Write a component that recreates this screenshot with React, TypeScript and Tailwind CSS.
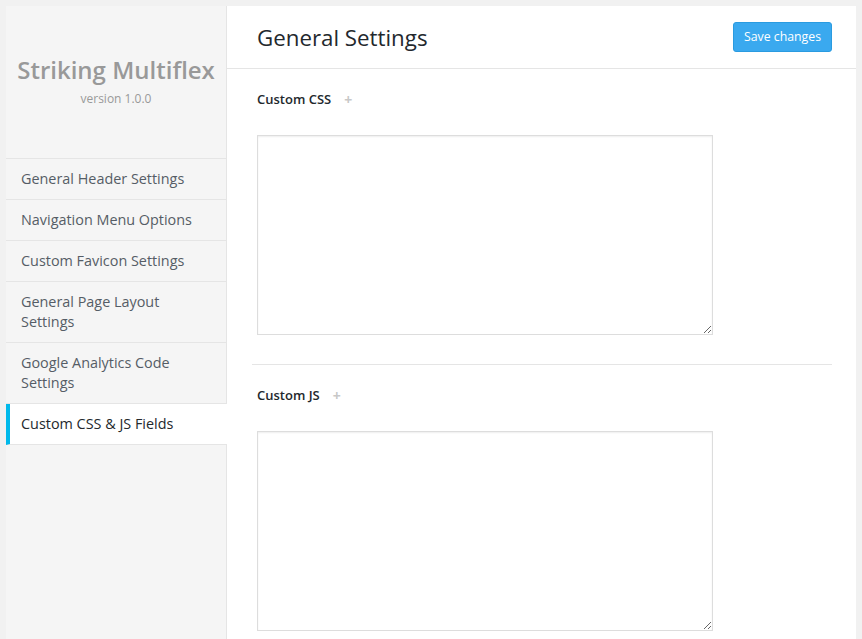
import { useState } from "react";

const navItems = [
  "General Header Settings",
  "Navigation Menu Options",
  "Custom Favicon Settings",
  "General Page Layout Settings",
  "Google Analytics Code Settings",
  "Custom CSS & JS Fields",
];

function CodeField({ label }: { label: string }) {
  return (
    <div className="px-[5px]">
      <div className="flex h-[20px] items-center gap-[13px]">
        <span className="text-[13px] font-semibold text-[#23282d]">{label}</span>
        <span className="text-[14px] font-bold leading-none text-[#c8c8c8]">+</span>
      </div>
      <textarea className="mt-[25px] block h-[200px] w-[456px] resize border border-[#dddddd] bg-white shadow-[inset_0_1px_2px_rgba(0,0,0,0.07)] outline-none" />
    </div>
  );
}

export default function App() {
  const [active, setActive] = useState(5);

  return (
    <div
      className="h-[639px] overflow-hidden bg-[#f1f1f1] pl-[6px] pr-[6px] pt-[6px]"
      style={{ fontFamily: '"Open Sans", "Noto Sans", sans-serif' }}
    >
      <div className="flex h-[700px] w-[850px] bg-white">
        <aside className="w-[221px] shrink-0 border-r border-[#e5e5e5] bg-[#f5f5f5]">
          <div className="flex h-[152px] flex-col items-center pt-[48px]">
            <div className="text-[24px] font-semibold leading-[32px] text-[#999999]">Striking Multiflex</div>
            <div className="mt-[4px] text-[12px] leading-[18px] text-[#999999]">version 1.0.0</div>
          </div>
          <nav className="border-t border-[#e5e5e5]">
            {navItems.map((item, i) => (
              <div
                key={item}
                onClick={() => setActive(i)}
                className={
                  "cursor-pointer border-b border-[#e5e5e5] py-[10px] pr-[30px] text-[14.4px] leading-[20px] " +
                  (i === active
                    ? "-mr-px border-l-4 border-l-[#00b9eb] bg-white pl-[11px] text-[#23282d]"
                    : "pl-[15px] text-[#555d66]")
                }
              >
                {item}
              </div>
            ))}
          </nav>
        </aside>
        <main className="flex-1">
          <header className="flex h-[63px] items-center justify-between border-b border-[#e5e5e5] pl-[30px] pr-[24px]">
            <h1 className="pt-[2px] text-[22.3px] font-normal leading-[30px] text-[#23282d]">General Settings</h1>
            <button className="h-[30px] rounded-[3px] border border-[#2a9be0] bg-[#3aa9ef] px-[10px] text-[12.3px] text-white">
              Save changes
            </button>
          </header>
          <div className="pl-[25px] pr-[24px] pt-[21px]">
            <CodeField label="Custom CSS" />
            <div className="mb-[21px] mt-[29px] border-t border-[#e5e5e5]" />
            <CodeField label="Custom JS" />
          </div>
        </main>
      </div>
    </div>
  );
}
